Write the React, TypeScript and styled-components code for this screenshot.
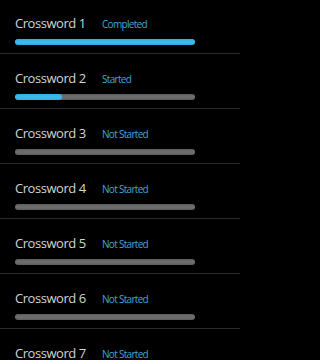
import React from "react";
import styled, { createGlobalStyle } from "styled-components";

const GlobalStyle = createGlobalStyle`
  html, body {
    margin: 0;
    padding: 0;
    background: #000;
  }
  body {
    font-family: "Open Sans", "Noto Sans", "DejaVu Sans", sans-serif;
    overflow: hidden;
  }
`;

const List = styled.div`
  width: 240px;
  height: 360px;
  background: #000;
  overflow: hidden;
`;

const Row = styled.div`
  padding: 16px 0 8px 15px;
  border-bottom: 1px solid #2c2c2c;

  &:first-child {
    padding-top: 15px;
  }
`;

const Header = styled.div`
  display: flex;
  align-items: baseline;
  height: 17px;
`;

const Title = styled.span`
  font-size: 13px;
  line-height: 17px;
  letter-spacing: -0.45px;
  color: #d4d4d4;
  width: 87px;
  white-space: nowrap;
`;

const Status = styled.span`
  font-size: 10px;
  line-height: 17px;
  letter-spacing: -0.7px;
  color: #40a6d8;
  white-space: nowrap;
`;

const Track = styled.div`
  margin-top: 7px;
  width: 180px;
  height: 6px;
  border-radius: 3px;
  background: linear-gradient(#5e5e5e, #707070 50%, #5e5e5e);
  overflow: hidden;
`;

const Fill = styled.div`
  height: 100%;
  border-radius: 3px;
  background: linear-gradient(#2fb0e2, #3dbcec 50%, #2fb0e2);
`;

type Item = { name: string; status: string; progress: number };

const items: Item[] = [
  { name: "Crossword 1", status: "Completed", progress: 100 },
  { name: "Crossword 2", status: "Started", progress: 26 },
  { name: "Crossword 3", status: "Not Started", progress: 0 },
  { name: "Crossword 4", status: "Not Started", progress: 0 },
  { name: "Crossword 5", status: "Not Started", progress: 0 },
  { name: "Crossword 6", status: "Not Started", progress: 0 },
  { name: "Crossword 7", status: "Not Started", progress: 0 },
];

const App = () => (
  <>
    <GlobalStyle />
    <List>
      {items.map((item) => (
        <Row key={item.name}>
          <Header>
            <Title>{item.name}</Title>
            <Status>{item.status}</Status>
          </Header>
          <Track>
            {item.progress > 0 && <Fill style={{ width: `${item.progress}%` }} />}
          </Track>
        </Row>
      ))}
    </List>
  </>
);

export default App;
